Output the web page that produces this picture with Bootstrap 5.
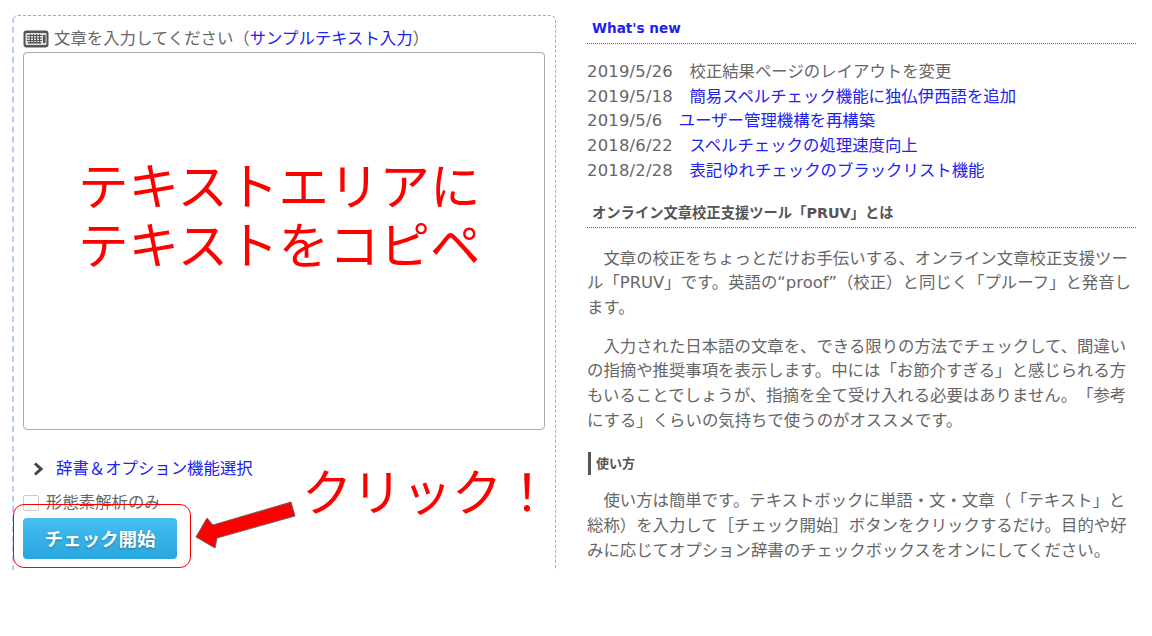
<!DOCTYPE html>
<html lang="ja">
<head>
<meta charset="utf-8">
<title>PRUV</title>
<link href="https://cdn.jsdelivr.net/npm/bootstrap@5.3.0/dist/css/bootstrap.min.css" rel="stylesheet">
<style>
html,body{background:#fff;margin:0;height:636px;overflow:hidden}
body{font-family:"DejaVu Sans","Noto Sans CJK JP",sans-serif;font-size:16.4px;color:#666;line-height:24.7px;text-spacing-trim:space-all;font-feature-settings:"palt" 0,"chws" 0}
a{color:#2222ee;text-decoration:none}
.pg-frame{position:relative;width:1152px;height:570px;overflow:hidden;padding:15px 0 0 12px;gap:31px}
.in-box{width:544px;height:600px;flex:none;border:1px dashed #8fabea;border-left:2px dashed #b8caf5;border-radius:6px;padding:9px 10px 0 9px}
.in-label{height:27px;gap:5px;line-height:24px}
.in-label svg{flex:none}
.in-area{display:block;width:522px;height:378px;border:1px solid #aaa;border-radius:4px;background:#fff;resize:none}
.opt-row{margin:26px 0 0 10px;gap:13px;line-height:26px}
.morph-row{margin-top:9px;gap:7px;height:24px;line-height:24px}
.morph-row .form-check-input{width:16px;height:16px;margin:0;border-radius:2px;border-color:#ccc}
.go-btn{margin-top:3px;width:154px;height:41px;padding:0;border:0;border-radius:4px;background:linear-gradient(#46bef1,#27a7de);color:#fff;font-weight:700;font-size:18.5px;line-height:41px;text-shadow:0 1px 2px rgba(0,0,0,.35);font-family:"Noto Sans CJK JP",sans-serif}
.info-col{width:549px;flex:none;padding-left:0}
.sec-title{margin:0;font-weight:700;border-bottom:1px dotted #666;padding-left:5px}
.sec-new{font-size:13.6px;color:#2222ee;height:29px;line-height:26px}
.sec-about{font-size:14.3px;color:#555;height:29px;line-height:28px;margin-top:15px}
.news-list{margin:16px 0 0;white-space:nowrap}
.news-date{letter-spacing:.22px}
.body-p{margin:0;text-indent:16.4px}
.first-p{margin-top:19px}
.next-p{margin-top:14px}
.sub-title{margin:19px 0 0 1px;font-size:13px;font-weight:700;color:#555;border-left:3px solid #555;padding-left:5px;height:23px;line-height:23px}
.sub-p{margin-top:14px}
.note-big{position:absolute;color:#f00;white-space:nowrap;font-family:"Noto Sans CJK JP",sans-serif;font-weight:400}
.note-a{left:78px;top:154px;font-size:50.5px;line-height:58.5px}
.note-b{left:302px;top:459px;font-size:50px;line-height:60px}
.note-box{position:absolute;left:13px;top:504px;width:178px;height:64px;border:1px solid #f00;border-radius:11px}
.note-arrow{position:absolute;left:190px;top:495px}
</style>
</head>
<body>
<div class="pg-frame d-flex align-items-start">
  <section class="in-box">
    <div class="in-label d-flex align-items-center">
      <svg width="26" height="18" viewBox="0 0 26 18"><rect x="0.5" y="0.5" width="25" height="17" rx="3" fill="#555"/><rect x="2.5" y="3" width="21" height="12" rx="1" fill="#ddd"/><g fill="#555"><rect x="4" y="5" width="15" height="1"/><rect x="4" y="7.5" width="15" height="1"/><rect x="4" y="10" width="15" height="1"/><rect x="5" y="12" width="13" height="1.5"/><rect x="7" y="4" width="1" height="8"/><rect x="10" y="4" width="1" height="8"/><rect x="13" y="4" width="1" height="8"/><rect x="16" y="4" width="1" height="8"/><rect x="20" y="5" width="2.5" height="8"/></g></svg>
      <span>文章を入力してください（<a href="#">サンプルテキスト入力</a>）</span>
    </div>
    <textarea class="in-area" aria-label="文章"></textarea>
    <div class="opt-row d-flex align-items-center">
      <svg width="10" height="14" viewBox="0 0 10 14"><path d="M2 1.5 8 7 2 12.500" fill="none" stroke="#444" stroke-width="3"/></svg>
      <a href="#">辞書＆オプション機能選択</a>
    </div>
    <label class="morph-row d-flex align-items-center"><input class="form-check-input" type="checkbox"><span>形態素解析のみ</span></label>
    <button class="btn go-btn d-block" type="button">チェック開始</button>
  </section>
  <section class="info-col">
    <h2 class="sec-title sec-new">What's new</h2>
    <ul class="list-unstyled news-list">
      <li><span class="news-date">2019/5/26</span>　校正結果ページのレイアウトを変更</li>
      <li><span class="news-date">2019/5/18</span>　<a href="#">簡易スペルチェック機能に独仏伊西語を追加</a></li>
      <li><span class="news-date">2019/5/6</span>　<a href="#">ユーザー管理機構を再構築</a></li>
      <li><span class="news-date">2018/6/22</span>　<a href="#">スペルチェックの処理速度向上</a></li>
      <li><span class="news-date">2018/2/28</span>　<a href="#">表記ゆれチェックのブラックリスト機能</a></li>
    </ul>
    <h3 class="sec-title sec-about">オンライン文章校正支援ツール「PRUV」とは</h3>
    <p class="body-p first-p">文章の校正をちょっとだけお手伝いする、オンライン文章校正支援ツール「PRUV」です。英語の“proof”（校正）と同じく「プルーフ」と発音します。</p>
    <p class="body-p next-p">入力された日本語の文章を、できる限りの方法でチェックして、間違いの指摘や推奨事項を表示します。中には「お節介すぎる」と感じられる方もいることでしょうが、指摘を全て受け入れる必要はありません。「参考にする」くらいの気持ちで使うのがオススメです。</p>
    <h4 class="sub-title">使い方</h4>
    <p class="body-p sub-p">使い方は簡単です。テキストボックに単語・文・文章（「テキスト」と総称）を入力して［チェック開始］ボタンをクリックするだけ。目的や好みに応じてオプション辞書のチェックボックスをオンにしてください。</p>
  </section>
  <div class="note-big note-a">テキストエリアに<br>テキストをコピペ</div>
  <div class="note-big note-b">クリック！</div>
  <div class="note-box"></div>
  <svg class="note-arrow" width="110" height="60" viewBox="190 495 110 60"><polygon points="291,502 295,516 217,538 215,548 196,537 207,518 213,525" fill="#f00" stroke="#666" stroke-width="1"/></svg>
</div>
<script src="https://cdn.jsdelivr.net/npm/bootstrap@5.3.0/dist/js/bootstrap.bundle.min.js"></script>
</body>
</html>
